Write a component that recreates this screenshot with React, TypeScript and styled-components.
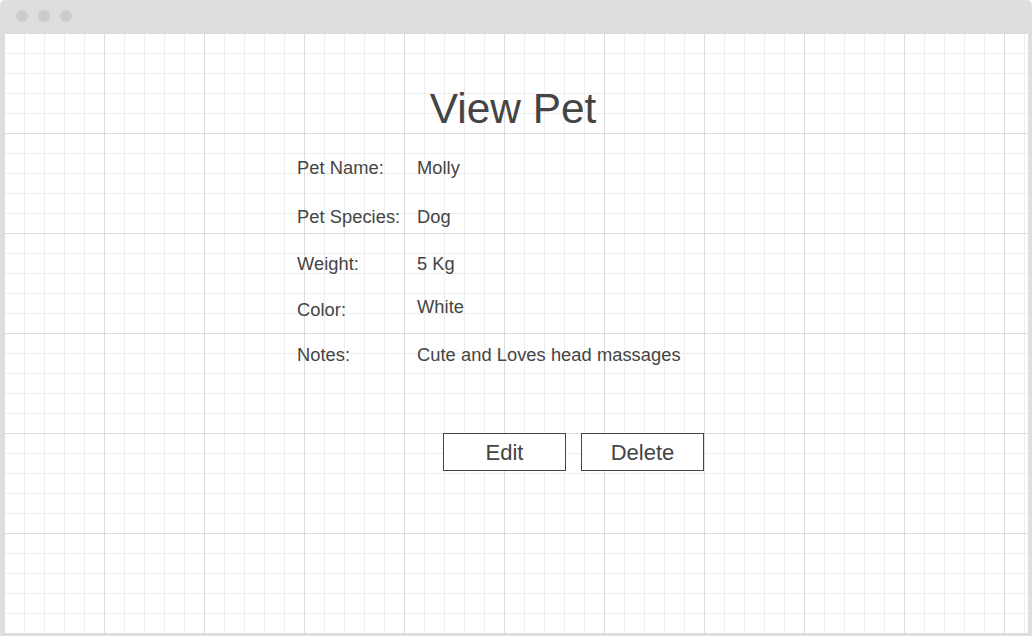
import React from "react";
import styled, { createGlobalStyle } from "styled-components";

const Global = createGlobalStyle`
  html, body { margin: 0; padding: 0; background: #ffffff; }
  body { font-family: "Liberation Sans", Arial, sans-serif; color: #444444; }
`;

const Window = styled.div`
  width: 1032px;
  height: 636px;
  box-sizing: border-box;
  background: #dedede;
  border-radius: 5px 5px 0 0;
  display: flex;
  flex-direction: column;
  padding: 0 4px 3px 4px;
`;

const TitleBar = styled.div`
  height: 33px;
  flex: none;
  display: flex;
  align-items: center;
  gap: 10px;
  padding-left: 12px;
  padding-bottom: 1px;
  box-sizing: border-box;
`;

const Dot = styled.span`
  width: 12px;
  height: 12px;
  border-radius: 50%;
  background: #cbcbcb;
`;

const Canvas = styled.main`
  flex: 1;
  background-color: #ffffff;
  background-image:
    linear-gradient(to right, #dcdcdc 1px, transparent 1px),
    linear-gradient(to bottom, #dcdcdc 1px, transparent 1px),
    linear-gradient(to right, #eeeeee 1px, transparent 1px),
    linear-gradient(to bottom, #eeeeee 1px, transparent 1px);
  background-size: 100px 100px, 100px 100px, 20px 20px, 20px 20px;
  display: flex;
  flex-direction: column;
`;

const Title = styled.h1`
  margin: 52px 0 0 0;
  font-size: 42.4px;
  line-height: 48px;
  font-weight: 400;
  text-align: center;
  color: #444444;
  padding-right: 6px;
`;

const Details = styled.section`
  margin-top: 24px;
  padding-left: 293px;
  display: flex;
  flex-direction: column;
`;

const Row = styled.div<{ $gap: number }>`
  display: grid;
  grid-template-columns: 120px auto;
  height: 21px;
  margin-top: ${(p) => p.$gap}px;
  font-size: 18.3px;
  line-height: 21px;
  letter-spacing: 0.05px;
`;

const Label = styled.span``;

const Value = styled.span<{ $lift?: number }>`
  position: relative;
  top: ${(p) => -(p.$lift ?? 0)}px;
`;

const Actions = styled.div`
  margin-top: 68px;
  padding-left: 439px;
  display: flex;
  gap: 15px;
`;

const Button = styled.button`
  width: 123px;
  height: 38px;
  box-sizing: border-box;
  border: 1px solid #444444;
  background: #ffffff;
  font-family: "Liberation Sans", Arial, sans-serif;
  font-size: 22px;
  color: #444444;
  padding: 2px 0 0 0;
  cursor: pointer;
`;

const rows = [
  { label: "Pet Name:", value: "Molly", gap: 0 },
  { label: "Pet Species:", value: "Dog", gap: 28 },
  { label: "Weight:", value: "5 Kg", gap: 26 },
  { label: "Color:", value: "White", gap: 25, lift: 3 },
  { label: "Notes:", value: "Cute and Loves head massages", gap: 24 },
];

export default function App() {
  return (
    <>
      <Global />
      <Window>
        <TitleBar>
          <Dot />
          <Dot />
          <Dot />
        </TitleBar>
        <Canvas>
          <Title>View Pet</Title>
          <Details>
            {rows.map((r) => (
              <Row key={r.label} $gap={r.gap}>
                <Label>{r.label}</Label>
                <Value $lift={r.lift}>{r.value}</Value>
              </Row>
            ))}
          </Details>
          <Actions>
            <Button>Edit</Button>
            <Button>Delete</Button>
          </Actions>
        </Canvas>
      </Window>
    </>
  );
}
